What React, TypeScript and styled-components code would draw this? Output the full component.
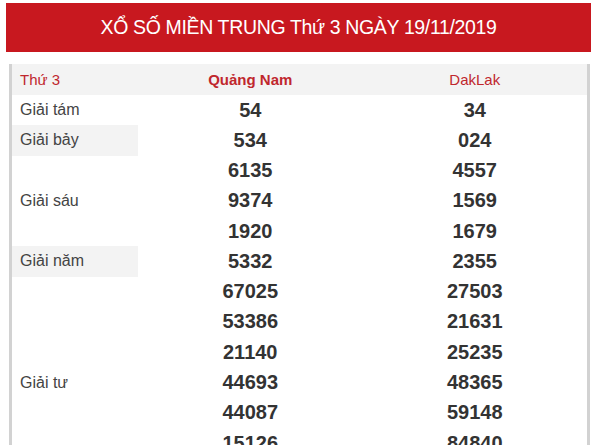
import React from "react";
import styled, { createGlobalStyle } from "styled-components";

interface IPrize {
  label: string;
  rows: [string, string][];
  shaded?: boolean;
  span?: number;
}

const prizes: IPrize[] = [
  { label: "Giải tám", rows: [["54", "34"]] },
  { label: "Giải bảy", rows: [["534", "024"]], shaded: true },
  {
    label: "Giải sáu",
    rows: [
      ["6135", "4557"],
      ["9374", "1569"],
      ["1920", "1679"],
    ],
  },
  { label: "Giải năm", rows: [["5332", "2355"]], shaded: true },
  {
    label: "Giải tư",
    span: 7,
    rows: [
      ["67025", "27503"],
      ["53386", "21631"],
      ["21140", "25235"],
      ["44693", "48365"],
      ["44087", "59148"],
      ["15126", "84840"],
    ],
  },
];

const App = () => {
  return (
    <>
      <GlobalStyle />
      <Page>
        <Banner>XỔ SỐ MIỀN TRUNG Thứ 3 NGÀY 19/11/2019</Banner>
        <Board>
          <HeadCell>Thứ 3</HeadCell>
          <HeadCell center bold>
            Quảng Nam
          </HeadCell>
          <HeadCell center>DakLak</HeadCell>
          {prizes.map((p) => (
            <React.Fragment key={p.label}>
              <Label shaded={p.shaded} span={p.span ?? p.rows.length}>
                {p.label}
              </Label>
              {p.rows.map(([a, b]) => (
                <React.Fragment key={a}>
                  <Number col={2}>{a}</Number>
                  <Number col={3}>{b}</Number>
                </React.Fragment>
              ))}
            </React.Fragment>
          ))}
        </Board>
      </Page>
    </>
  );
};

export default App;

const GlobalStyle = createGlobalStyle`
  html, body {
    margin: 0;
    padding: 0;
    background: #ffffff;
    font-family: "Liberation Sans", Arial, sans-serif;
  }
`;

const Page = styled.div`
  padding: 3px 9px 0 6px;
  display: flex;
  flex-direction: column;
  width: 600px;
  box-sizing: border-box;
`;

const Banner = styled.h1`
  margin: 0;
  width: 585px;
  height: 49px;
  background-color: #c8181f;
  color: #ffffff;
  font-size: 19.5px;
  font-weight: normal;
  display: flex;
  align-items: center;
  justify-content: center;
  letter-spacing: -0.35px;
`;

const Board = styled.div`
  margin: 12px 0 0 3px;
  width: 581px;
  box-sizing: border-box;
  border-left: 3px solid #d2d2d2;
  border-right: 3px solid #d2d2d2;
  display: grid;
  grid-template-columns: 126px 1fr 1fr;
  grid-template-rows: 31px;
  grid-auto-rows: 30.27px;
`;

const HeadCell = styled.div<{ center?: boolean; bold?: boolean }>`
  background-color: #f3f3f3;
  color: #c0272d;
  font-size: 15px;
  font-weight: ${(p) => (p.bold ? "bold" : "normal")};
  display: flex;
  align-items: center;
  justify-content: ${(p) => (p.center ? "center" : "flex-start")};
  padding-left: ${(p) => (p.center ? "0" : "8px")};
`;

const Label = styled.div<{ shaded?: boolean; span: number }>`
  grid-column: 1;
  grid-row: span ${(p) => p.span};
  background-color: ${(p) => (p.shaded ? "#f3f3f3" : "#ffffff")};
  color: #444444;
  font-size: 16px;
  display: flex;
  align-items: center;
  padding-left: 8px;
`;

const Number = styled.div<{ col: number }>`
  grid-column: ${(p) => p.col};
  color: #333333;
  font-size: 20px;
  font-weight: bold;
  display: flex;
  align-items: center;
  justify-content: center;
`;
